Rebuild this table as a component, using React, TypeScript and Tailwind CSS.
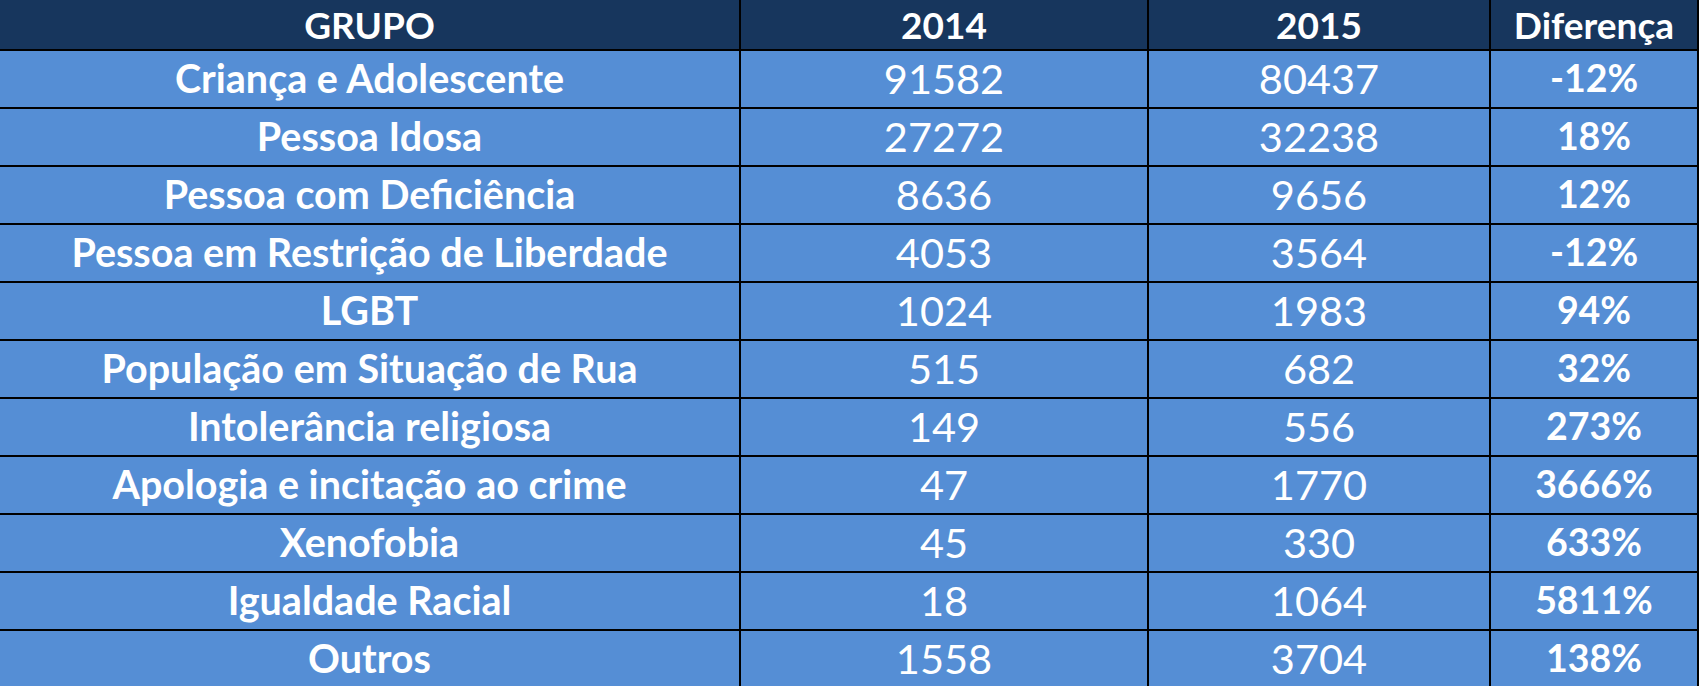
const rows = [
  ['Criança e Adolescente', '91582', '80437', '-12%'],
  ['Pessoa Idosa', '27272', '32238', '18%'],
  ['Pessoa com Deficiência', '8636', '9656', '12%'],
  ['Pessoa em Restrição de Liberdade', '4053', '3564', '-12%'],
  ['LGBT', '1024', '1983', '94%'],
  ['População em Situação de Rua', '515', '682', '32%'],
  ['Intolerância religiosa', '149', '556', '273%'],
  ['Apologia e incitação ao crime', '47', '1770', '3666%'],
  ['Xenofobia', '45', '330', '633%'],
  ['Igualdade Racial', '18', '1064', '5811%'],
  ['Outros', '1558', '3704', '138%'],
];

export default function App() {
  return (
    <div className="w-[1700px] h-[686px] overflow-hidden bg-white font-['Lato',sans-serif] text-white">
      <div className="grid w-[1699px] grid-cols-[739px_406px_340px_206px] gap-[2px] bg-black pr-[2px]">
        {/* header */}
        <div className="flex h-[49px] items-center justify-center bg-[#17365d] text-[37px] font-bold">GRUPO</div>
        <div className="flex h-[49px] items-center justify-center bg-[#17365d] text-[37px] font-bold">2014</div>
        <div className="flex h-[49px] items-center justify-center bg-[#17365d] text-[37px] font-bold">2015</div>
        <div className="flex h-[49px] items-center justify-center bg-[#17365d] text-[37px] font-bold">Diferença</div>

        {rows.map(([grupo, a, b, diff]) => (
          <div key={grupo} className="contents">
            <div className="flex h-[56px] items-center justify-center bg-[#558ed5] pb-[2px] text-[39.5px] font-bold">{grupo}</div>
            <div className="flex h-[56px] items-center justify-center bg-[#558ed5] pb-[2px] text-[41.5px]">{a}</div>
            <div className="flex h-[56px] items-center justify-center bg-[#558ed5] pb-[2px] text-[41.5px]">{b}</div>
            <div className="flex h-[56px] items-center justify-center bg-[#558ed5] pb-[2px] text-[37.5px] font-bold">{diff}</div>
          </div>
        ))}
      </div>
    </div>
  );
}
